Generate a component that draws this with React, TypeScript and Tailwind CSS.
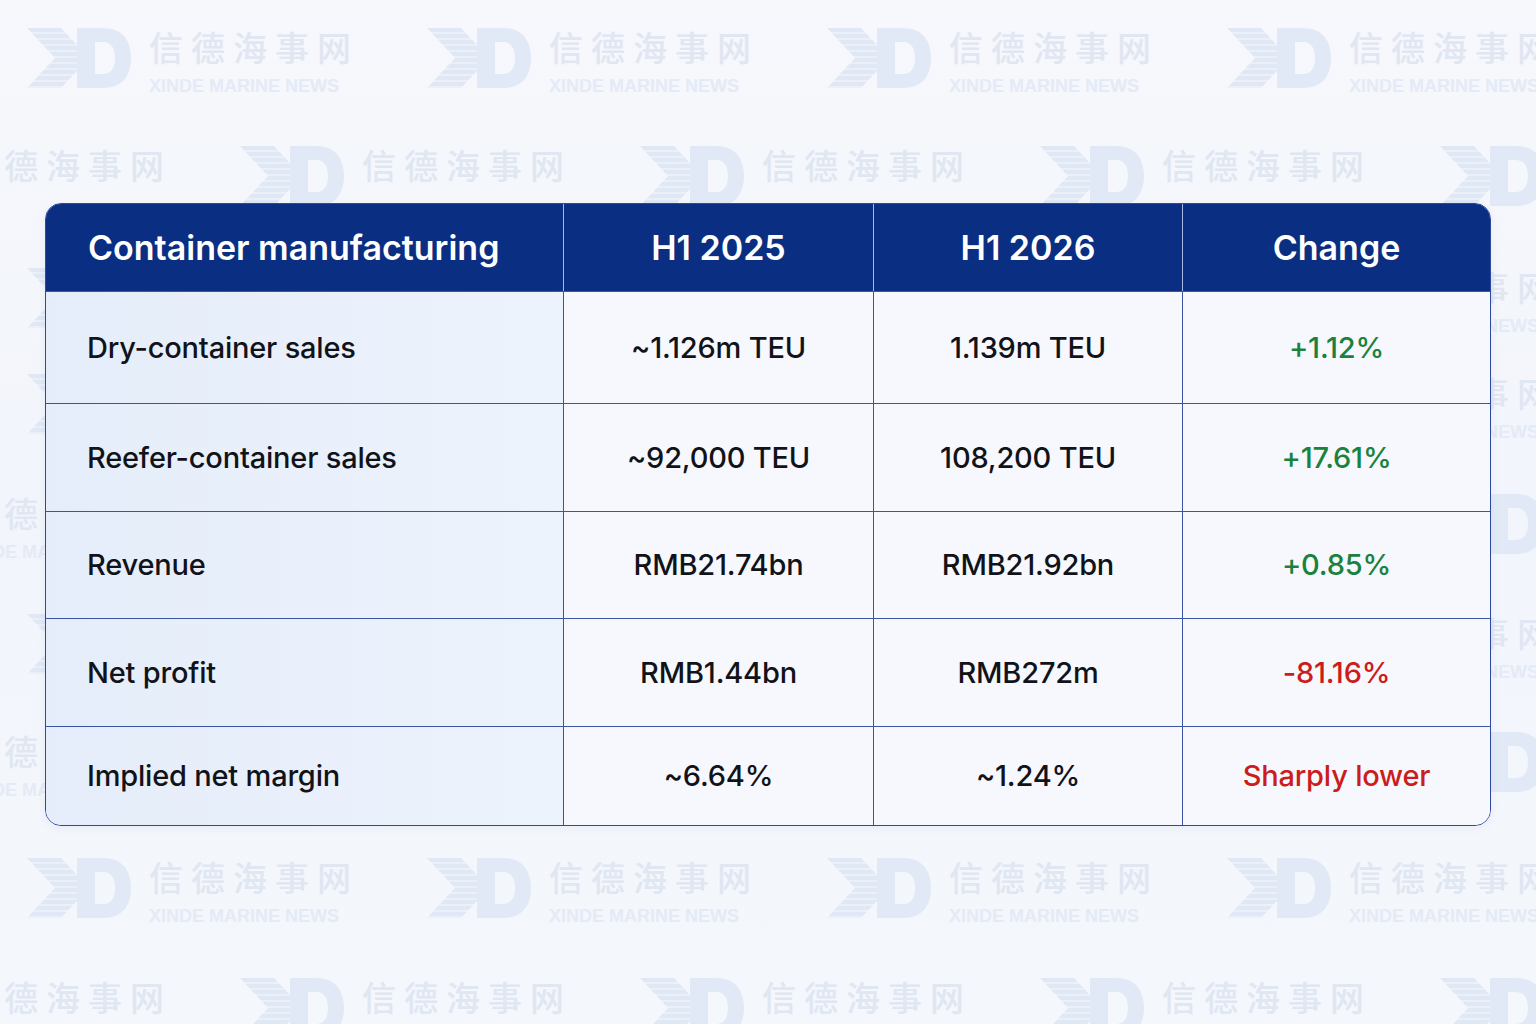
import React from "react";

const Logo = () => (
  <svg width="104" height="60" viewBox="0 0 104 60" className="block">
    <defs>
      <pattern id="stripes" width="4" height="6" patternUnits="userSpaceOnUse">
        <rect width="4" height="4.4" fill="#e0e7f5" />
        <rect y="4.4" width="4" height="1.6" fill="#eaeff9" />
      </pattern>
    </defs>
    <polygon points="0,0 34,0 62,30 34,60 0,60 28,30" fill="url(#stripes)" />
    <path
      fillRule="evenodd"
      d="M50,0 H76 C95,0 104,12 104,30 C104,48 95,60 76,60 H50 Z M68,14 H76 C84,14 88,20 88,30 C88,40 84,46 76,46 H68 Z"
      fill="#e2e9f6"
    />
  </svg>
);

const Unit = ({ english = true }: { english?: boolean }) => (
  <div className="flex items-start gap-[18px] w-[400px] shrink-0">
    <Logo />
    <div className="flex flex-col pt-[1px]">
      <div
        className="text-[34px] leading-[36px] tracking-[8px] text-[#e0e6f2] font-medium"
        style={{ fontFamily: '"Noto Sans CJK SC", "Noto Sans", sans-serif' }}
      >
        信德海事网
      </div>
      {english && (
        <div
          className="text-[18px] leading-[20px] mt-[11px] text-[#e4eaf6] font-bold whitespace-nowrap"
          style={{ fontFamily: '"Liberation Sans", Arial, sans-serif' }}
        >
          XINDE MARINE NEWS
        </div>
      )}
    </div>
  </div>
);

type WRow = { top: number; left: number; full: boolean; english: boolean };

const rows: WRow[] = [
  { top: 28, left: 27, full: true, english: true },
  { top: 146, left: -160, full: true, english: false },
  { top: 268, left: 27, full: false, english: true },
  { top: 374, left: 27, full: false, english: true },
  { top: 494, left: -160, full: false, english: true },
  { top: 614, left: 27, full: false, english: true },
  { top: 732, left: -160, full: false, english: true },
  { top: 858, left: 27, full: true, english: true },
  { top: 978, left: -160, full: true, english: true },
];

const Watermark = () => (
  <div className="absolute inset-0 pointer-events-none">
    {rows.map((r, i) => {
      const idx = r.left < 0 ? [0, 1, 2, 3, 4] : [0, 1, 2, 3];
      const shown = r.full ? idx : [idx[0], idx[idx.length - 1]];
      return shown.map((k) => (
        <div key={`${i}-${k}`} className="absolute" style={{ top: r.top, left: r.left + k * 400 }}>
          <Unit english={r.english} />
        </div>
      ));
    })}
  </div>
);

type Row = { label: string; a: string; b: string; c: string; tone: "up" | "down"; h: string };

const data: Row[] = [
  { label: "Dry-container sales", a: "~1.126m TEU", b: "1.139m TEU", c: "+1.12%", tone: "up", h: "h-[112px]" },
  { label: "Reefer-container sales", a: "~92,000 TEU", b: "108,200 TEU", c: "+17.61%", tone: "up", h: "h-[108px]" },
  { label: "Revenue", a: "RMB21.74bn", b: "RMB21.92bn", c: "+0.85%", tone: "up", h: "h-[107px]" },
  { label: "Net profit", a: "RMB1.44bn", b: "RMB272m", c: "-81.16%", tone: "down", h: "h-[108px]" },
  { label: "Implied net margin", a: "~6.64%", b: "~1.24%", c: "Sharply lower", tone: "down", h: "h-[99px]" },
];

export default function App() {
  return (
    <div
      className="relative w-[1536px] h-[1024px] overflow-hidden bg-gradient-to-b from-[#f6f8fc] via-[#f2f5fb] to-[#f4f7fc]"
      style={{ fontFamily: 'Inter, "Noto Sans", sans-serif' }}
    >
      <Watermark />
      <div className="relative pt-[203px] pl-[45px]">
        <div className="w-[1446px] rounded-[16px] border border-[#2e4a9e] overflow-hidden shadow-[0_2px_10px_rgba(30,60,140,0.06)]">
          <div className="grid grid-cols-[517px_310px_309px_1fr] h-[87px] bg-[#0a2f82] text-white text-[34px] font-semibold">
            <div className="flex items-center pl-[42px]">Container manufacturing</div>
            <div className="flex items-center justify-center border-l border-[#a9b8e0]">H1 2025</div>
            <div className="flex items-center justify-center border-l border-[#a9b8e0]">H1 2026</div>
            <div className="flex items-center justify-center border-l border-[#a9b8e0]">Change</div>
          </div>
          {data.map((r, i) => (
            <div
              key={i}
              className={`grid grid-cols-[517px_310px_309px_1fr] ${r.h} text-[29px] font-medium tracking-[-0.2px] text-[#111318] border-t border-[#3a55a6]`}
            >
              <div className="flex items-center pl-[41px] bg-gradient-to-r from-[#e5edfa] to-[#edf3fc]">{r.label}</div>
              <div className="flex items-center justify-center border-l border-[#3a55a6] bg-[#f6f8fd]">{r.a}</div>
              <div className="flex items-center justify-center border-l border-[#3a55a6] bg-[#f6f8fd]">{r.b}</div>
              <div
                className={`flex items-center justify-center border-l border-[#3a55a6] bg-[#f6f8fd] ${
                  r.tone === "up" ? "text-[#1a823d]" : "text-[#cc1c1c]"
                }`}
              >
                {r.c}
              </div>
            </div>
          ))}
        </div>
      </div>
    </div>
  );
}
